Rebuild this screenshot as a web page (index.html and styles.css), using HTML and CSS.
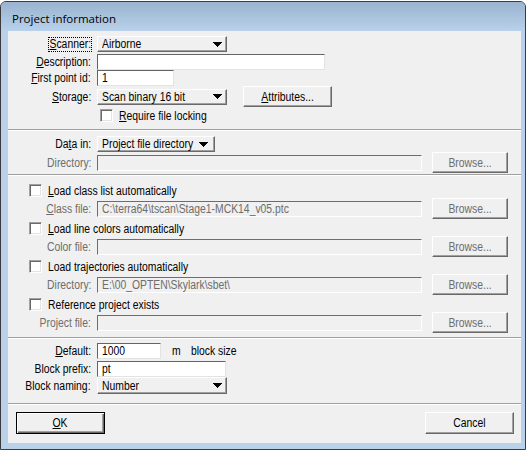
FILE: index.html
```html
<!DOCTYPE html>
<html>
<head>
<meta charset="utf-8">
<title>Project information</title>
<link rel="stylesheet" href="styles.css">
</head>
<body>
<div class="window">
  <div class="titlebar">Project information</div>
  <div class="frame">
    <div class="client">
      <div class="sec s1">
        <div class="row h16">
          <span class="lbl"><span class="focus"><span class="n"><u>S</u>canner:</span></span></span>
          <div class="combo w130"><span class="n">Airborne</span><svg class="arrow" width="9" height="5" viewBox="0 0 9 5"><path d="M0 0h9v1h-1v1h-1v1h-1v1h-1v1h-1v-1h-1v-1h-1v-1h-1v-1h-1z"/></svg></div>
        </div>
        <div class="row h16 mt2">
          <span class="lbl"><span class="n"><u>D</u>escription:</span></span>
          <div class="edit w228"></div>
        </div>
        <div class="row h16">
          <span class="lbl"><span class="n"><u>F</u>irst point id:</span></span>
          <div class="edit w77"><span class="n">1</span></div>
        </div>
        <div class="row h21">
          <span class="lbl"><span class="n"><u>S</u>torage:</span></span>
          <div class="combo w130"><span class="n">Scan binary 16 bit</span><svg class="arrow" width="9" height="5" viewBox="0 0 9 5"><path d="M0 0h9v1h-1v1h-1v1h-1v1h-1v1h-1v-1h-1v-1h-1v-1h-1v-1h-1z"/></svg></div>
          <div class="btn w89 ml16"><span class="n"><u>A</u>ttributes...</span></div>
        </div>
        <div class="row h13 mt2 indent-s1">
          <span class="check"></span><span class="clabel"><span class="n"><u>R</u>equire file locking</span></span>
        </div>
      </div>
      <div class="sep"></div>
      <div class="sec s2">
        <div class="row h16">
          <span class="lbl"><span class="n">Da<u>t</u>a in:</span></span>
          <div class="combo w118 pr7"><span class="n">Project file directory</span><svg class="arrow" width="9" height="5" viewBox="0 0 9 5"><path d="M0 0h9v1h-1v1h-1v1h-1v1h-1v1h-1v-1h-1v-1h-1v-1h-1v-1h-1z"/></svg></div>
        </div>
        <div class="row h21">
          <span class="lbl dis"><span class="n">Directory:</span></span>
          <div class="edit off wpath"></div>
          <div class="btn dis w76 ml10"><span class="n">Browse...</span></div>
        </div>
      </div>
      <div class="sep"></div>
      <div class="sec s3">
        <div class="row h13 indent-s3">
          <span class="check"></span><span class="clabel"><span class="n"><u>L</u>oad class list automatically</span></span>
        </div>
        <div class="row h21 mt1">
          <span class="lbl dis"><span class="n"><u>C</u>lass file:</span></span>
          <div class="edit off wpath"><span class="n">C:\terra64\tscan\Stage1-MCK14_v05.ptc</span></div>
          <div class="btn dis w76 ml10"><span class="n">Browse...</span></div>
        </div>
        <div class="row h13 mt3 indent-s3">
          <span class="check"></span><span class="clabel"><span class="n"><u>L</u>oad line colors automatically</span></span>
        </div>
        <div class="row h21 mt1">
          <span class="lbl dis"><span class="n">Color file:</span></span>
          <div class="edit off wpath"></div>
          <div class="btn dis w76 ml10"><span class="n">Browse...</span></div>
        </div>
        <div class="row h13 mt3 indent-s3">
          <span class="check"></span><span class="clabel"><span class="n">Load trajectories automatically</span></span>
        </div>
        <div class="row h21 mt1">
          <span class="lbl dis"><span class="n">Directory:</span></span>
          <div class="edit off wpath"><span class="n">E:\00_OPTEN\Skylark\sbet\</span></div>
          <div class="btn dis w76 ml10"><span class="n">Browse...</span></div>
        </div>
        <div class="row h13 mt3 indent-s3">
          <span class="check"></span><span class="clabel"><span class="n">Reference project exists</span></span>
        </div>
        <div class="row h21 mt1">
          <span class="lbl dis"><span class="n">Project file:</span></span>
          <div class="edit off wpath"></div>
          <div class="btn dis w76 ml10"><span class="n">Browse...</span></div>
        </div>
      </div>
      <div class="sep"></div>
      <div class="sec s4">
        <div class="row h16">
          <span class="lbl"><span class="n"><u>D</u>efault:</span></span>
          <div class="edit w64"><span class="n">1000</span></div>
          <span class="unit"><span class="n">m</span></span><span class="unit2"><span class="n">block size</span></span>
        </div>
        <div class="row h16 mt2">
          <span class="lbl"><span class="n">Block prefix:</span></span>
          <div class="edit w129"><span class="n">pt</span></div>
        </div>
        <div class="row h17">
          <span class="lbl"><span class="n">Block naming:</span></span>
          <div class="combo w130"><span class="n">Number</span><svg class="arrow" width="9" height="5" viewBox="0 0 9 5"><path d="M0 0h9v1h-1v1h-1v1h-1v1h-1v1h-1v-1h-1v-1h-1v-1h-1v-1h-1z"/></svg></div>
        </div>
      </div>
      <div class="sep"></div>
      <div class="sec s5">
        <div class="btn default w89"><span class="n"><u>O</u>K</span></div>
        <div class="btn w89"><span class="n">Cancel</span></div>
      </div>
    </div>
  </div>
</div>
</body>
</html>
```

FILE: styles.css
```css
* { box-sizing: border-box; }

body {
  margin: 0;
  background: #ffffff;
  font-family: "Liberation Sans", Arial, sans-serif;
  font-size: 12.5px;
  color: #000;
}

/* narrow glyphs, like the dialog font of the original */
.n {
  display: inline-block;
  transform: scaleX(0.83);
  transform-origin: left center;
  line-height: 14px;
  white-space: nowrap;
}
.lbl .n { transform-origin: right center; }
.btn .n { transform-origin: center center; }

.window {
  width: 526px;
  height: 449px;
  margin-top: 1px;
  border: 1px solid #3b3b3b;
  border-radius: 6px 6px 0 0;
  background: #b9d1ea;
  display: flex;
  flex-direction: column;
  overflow: hidden;
}

.titlebar {
  height: 29px;
  flex: none;
  background: linear-gradient(#99b4d1, #b9d1ea);
  font-family: "Open Sans", "Noto Sans", sans-serif;
  font-size: 11.5px;
  color: #000;
  padding-left: 11px;
  padding-top: 4px;
  display: flex;
  align-items: center;
}

.frame {
  flex: 1;
  padding: 0 4px 6px 7px;
  display: flex;
}

.client {
  flex: 1;
  background: #f0f0f0;
  display: flex;
  flex-direction: column;
}

.sec { display: flex; flex-direction: column; }
.s1 { padding: 5px 0 7px; }
.s2 { padding: 5px 0 1px; }
.s3 { padding: 8px 0 4px; }
.s4 { padding: 4px 0 9px; }
.s5 {
  flex: 1;
  flex-direction: row;
  justify-content: space-between;
  padding: 7px 7px 0 8px;
}

.sep {
  height: 2px;
  flex: none;
  border-top: 1px solid #a0a0a0;
  border-bottom: 1px solid #ffffff;
}

.row { display: flex; align-items: center; flex: none; }
.h13 { height: 13px; }
.h16 { height: 16px; }
.h17 { height: 17px; }
.h21 { height: 21px; }
.mt1 { margin-top: 1px; }
.mt2 { margin-top: 2px; }
.mt3 { margin-top: 3px; }
.ml10 { margin-left: 10px; }
.ml16 { margin-left: 16px; }

.lbl {
  width: 83px;
  flex: none;
  margin-right: 6px;
  text-align: right;
  white-space: nowrap;
  line-height: 14px;
  display: flex;
  justify-content: flex-end;
}
.dis { color: #6d6d6d; }

.focus {
  display: flex;
  justify-content: flex-end;
  width: 44px;
  height: 15px;
  margin-right: -1px;
  padding-right: 1px;
  align-items: center;
  outline: 1px dotted #000;
  outline-offset: -1px;
}

.edit {
  height: 16px;
  flex: none;
  background: #fff;
  border: 1px solid;
  border-color: #646464 #e3e3e3 #e3e3e3 #646464;
  padding-left: 4px;
  display: flex;
  align-items: center;
  white-space: nowrap;
  overflow: hidden;
}
.edit.off {
  background: #f0f0f0;
  border-color: #6d6d6d #fff #fff #6d6d6d;
  color: #6d6d6d;
}

.combo {
  height: 16px;
  flex: none;
  background: #f0f0f0;
  border: 1px solid;
  border-color: #fff #696969 #696969 #fff;
  box-shadow: inset -1px -1px 0 #a0a0a0;
  display: flex;
  align-items: center;
  padding: 0 4px 0 4px;
  white-space: nowrap;
  overflow: hidden;
}
.combo .n { flex: 1 1 0; min-width: 0; }
.combo.pr7 { padding-right: 6px; }
.h17 .combo { height: 17px; }
.arrow { display: block; flex: none; fill: #000; shape-rendering: crispEdges; }

.btn {
  height: 21px;
  flex: none;
  background: #f0f0f0;
  border: 1px solid;
  border-color: #fff #696969 #696969 #fff;
  box-shadow: inset -1px -1px 0 #a0a0a0;
  display: flex;
  align-items: center;
  justify-content: center;
  white-space: nowrap;
}
.btn.dis { color: #6d6d6d; }
.s5 .btn { height: 22px; }
.btn.default {
  border: 1px solid #000;
  box-shadow: inset 1px 1px 0 #fff, inset -1px -1px 0 #696969, inset -2px -2px 0 #a0a0a0;
}

.w64 { width: 64px; }
.w76 { width: 76px; }
.w77 { width: 77px; }
.w89 { width: 89px; }
.w118 { width: 118px; }
.w129 { width: 129px; }
.w130 { width: 130px; }
.w228 { width: 228px; }
.wpath { width: 325px; }

.indent-s1 { padding-left: 92px; }
.indent-s3 { padding-left: 21px; }

.check {
  width: 13px;
  height: 13px;
  flex: none;
  background: #fff;
  border: 1px solid;
  border-color: #a0a0a0 #fff #fff #a0a0a0;
  box-shadow: inset 1px 1px 0 #696969, inset -1px -1px 0 #e3e3e3;
}
.clabel { margin-left: 6px; line-height: 14px; white-space: nowrap; }

.unit { margin-left: 11px; }
.unit2 { margin-left: 9px; }
```
